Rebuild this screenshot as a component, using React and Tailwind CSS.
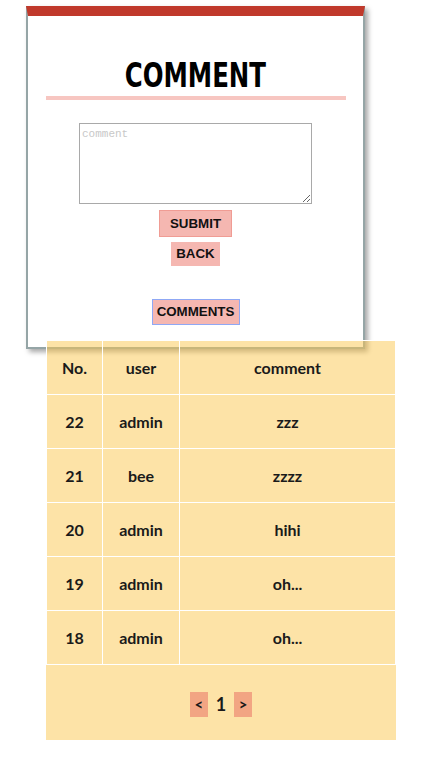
import React from 'react';

const rows = [
    { no: 22, user: 'admin', comment: 'zzz' },
    { no: 21, user: 'bee', comment: 'zzzz' },
    { no: 20, user: 'admin', comment: 'hihi' },
    { no: 19, user: 'admin', comment: 'oh...' },
    { no: 18, user: 'admin', comment: 'oh...' },
];

export default function App() {
    return (
        <div className="min-h-[759px] bg-white pt-[6px] font-['Lato','Noto_Sans',sans-serif] text-[#1a1a1a]">
            {/* Comment card */}
            <div className="relative ml-[26px] w-[339px] bg-white border-2 border-[#95a5a6] border-t-[10px] border-t-[#c0392b] shadow-[3px_3px_5px_rgba(0,0,0,0.35)] pt-[42px] pb-[22px] flex flex-col items-center">
                {/* condensed title */}
                <h1 className="font-['DejaVu_Sans_Condensed','DejaVu_Sans',sans-serif] font-bold text-[34px] leading-[34px] text-black scale-x-[0.8]">
                    COMMENT
                </h1>
                <div className="mt-[4px] w-[300px] h-[4px] bg-[#f7c6c1]"></div>

                <textarea
                    placeholder="comment"
                    className="block mt-[23px] w-[233px] h-[81px] border border-[#a9a9a9] p-[2px] font-['Liberation_Mono','DejaVu_Sans_Mono',monospace] text-[11px] placeholder:text-[#c8c8c8] outline-none"
                ></textarea>

                <button className="mt-[6px] w-[73px] h-[27px] flex items-center justify-center bg-[#f5b7b1] border border-[#f09c94] font-['Liberation_Sans',Arial,sans-serif] font-bold text-[13.33px] text-[#111]">
                    SUBMIT
                </button>
                <button className="mt-[5px] w-[49px] h-[24px] flex items-center justify-center bg-[#f5b7b1] font-['Liberation_Sans',Arial,sans-serif] font-bold text-[13.33px] text-[#111]">
                    BACK
                </button>
                <button className="mt-[33px] w-[88px] h-[26px] flex items-center justify-center bg-[#f5b7b1] border border-[#8fa8f5] font-['Liberation_Sans',Arial,sans-serif] font-bold text-[13.33px] text-[#111]">
                    COMMENTS
                </button>
            </div>

            {/* Comment list */}
            <table className="relative -mt-[9px] ml-[46px] w-[350px] border-collapse bg-[rgba(251,199,79,0.5)] text-[16px] font-bold text-center">
                <thead>
                    <tr>
                        <th className="w-[56px] h-[54px] border border-white font-bold">No.</th>
                        <th className="w-[77px] h-[54px] border border-white font-bold">user</th>
                        <th className="h-[54px] border border-white font-bold">comment</th>
                    </tr>
                </thead>
                <tbody>
                    {rows.map((r) => (
                        <tr key={r.no}>
                            <td className="h-[54px] border border-white">{r.no}</td>
                            <td className="h-[54px] border border-white">{r.user}</td>
                            <td className="h-[54px] border border-white">{r.comment}</td>
                        </tr>
                    ))}
                    <tr>
                        <td colSpan={3} className="h-[75px] border-t border-white">
                            <div className="flex items-center justify-center gap-[8px] pt-[4px]">
                                <span className="w-[18px] h-[25px] flex items-center justify-center bg-[#f2a583] text-[15px]">&lt;</span>
                                <span className="text-[18px]">1</span>
                                <span className="w-[18px] h-[25px] flex items-center justify-center bg-[#f2a583] text-[15px]">&gt;</span>
                            </div>
                        </td>
                    </tr>
                </tbody>
            </table>
        </div>
    );
}
